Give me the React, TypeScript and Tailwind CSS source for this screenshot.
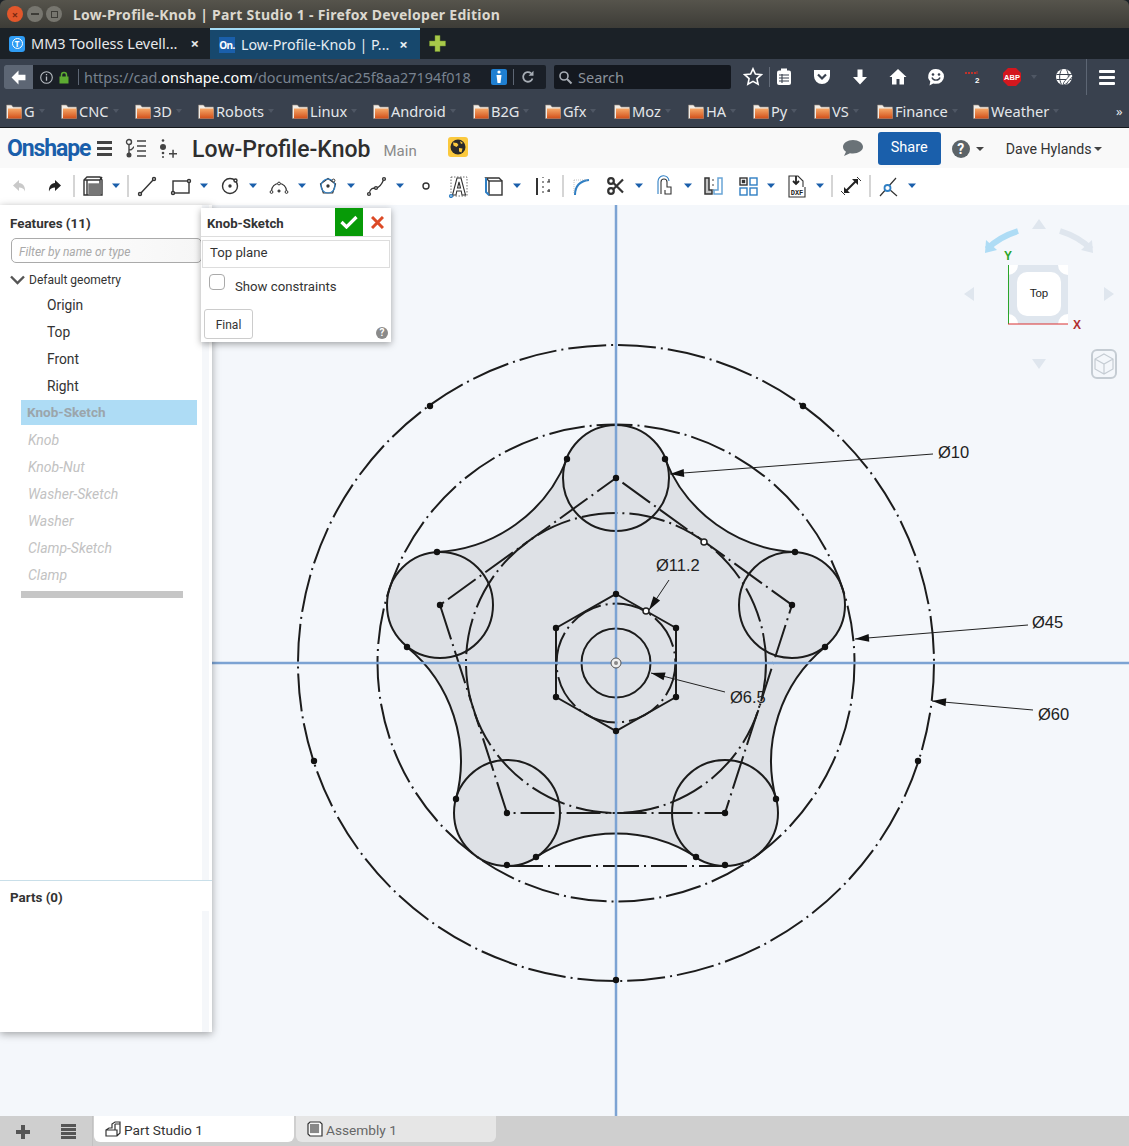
import React from "react";

const chrome = "font-['Noto_Sans',sans-serif]";
const ui = "font-['Roboto',sans-serif]";

function Folder() {
  return (
    <svg width="16" height="15" viewBox="0 0 16 15" className="shrink-0">
      <defs>
        <linearGradient id="fold" x1="0" y1="0" x2="0" y2="1">
          <stop offset="0" stopColor="#f6a868" />
          <stop offset="1" stopColor="#d2501a" />
        </linearGradient>
      </defs>
      <path d="M0.5 14.5V1h5l1.5 2h8.5v11.5z" fill="#f1ece6" stroke="#8d8378" strokeWidth="0.6" />
      <rect x="2" y="4.5" width="13.5" height="10" fill="url(#fold)" />
    </svg>
  );
}

function Bookmark({ label, cls }: { label: string; cls: string }) {
  return (
    <div className={`flex items-center shrink-0 ${cls}`}>
      <Folder />
      <span className="ml-[2px] text-[14.6px] text-[#e4e7ea] leading-none">{label}</span>
      <span className="ml-[4px] w-0 h-0 border-x-[3px] border-x-transparent border-t-[4px] border-t-[#4f5764]" />
    </div>
  );
}

function Caret({ cls }: { cls: string }) {
  return (
    <svg width="10" height="6" viewBox="0 0 10 6" className={`shrink-0 ${cls}`}>
      <path d="M1 0.5h8L5 5z" fill="#1a5fab" />
    </svg>
  );
}

function Sep({ cls }: { cls: string }) {
  return <div className={`w-[2px] h-[22px] bg-[#d5d5d5] shrink-0 ${cls}`} />;
}

function Tool({ cls, children }: { cls: string; children: React.ReactNode }) {
  return (
    <svg width="24" height="24" viewBox="0 0 24 24" fill="none" stroke="#333" strokeWidth="1.4" className={`shrink-0 ${cls}`}>
      {children}
    </svg>
  );
}

function NavIcon({ cls, children }: { cls: string; children: React.ReactNode }) {
  return (
    <svg width="20" height="20" viewBox="0 0 20 20" className={`shrink-0 ${cls}`}>
      {children}
    </svg>
  );
}

function TitleBar() {
  return (
    <div className={`h-[28px] shrink-0 rounded-t-[6px] bg-gradient-to-b from-[#56544c] to-[#3d3c37] flex items-center pl-[7px] ${chrome}`}>
      <div className="w-[16px] h-[16px] rounded-full bg-[#e2572b] flex items-center justify-center text-[#7a2a12] text-[11px] font-bold leading-none">×</div>
      <div className="ml-[4px] w-[16px] h-[16px] rounded-full bg-[#77766f] flex items-center justify-center">
        <div className="w-[8px] h-[2px] bg-[#3d3c37]" />
      </div>
      <div className="ml-[3px] w-[16px] h-[16px] rounded-full bg-[#77766f] flex items-center justify-center">
        <div className="w-[7px] h-[7px] border border-[#3d3c37]" />
      </div>
      <span className="ml-[11px] text-[14px] font-bold text-[#dcd8cf] tracking-[0.28px] whitespace-nowrap">
        Low-Profile-Knob | Part Studio 1 - Firefox Developer Edition
      </span>
    </div>
  );
}

function TabStrip() {
  return (
    <div className={`h-[31px] shrink-0 bg-[#1b2127] flex items-stretch ${chrome}`}>
      <div className="w-[210px] flex items-center pl-[9px]">
        <div className="w-[16px] h-[16px] rounded-[3px] bg-[#2f9cf4] flex items-center justify-center">
          <div className="w-[11px] h-[11px] rounded-full border border-white text-white text-[8px] leading-[9px] text-center font-bold">T</div>
        </div>
        <span className="ml-[6px] text-[14.5px] text-[#e7e9eb] whitespace-nowrap">MM3 Toolless Levell...</span>
        <span className="ml-[13px] text-[#e7e9eb] text-[15px] font-bold leading-none">×</span>
      </div>
      <div className="w-[210px] bg-[#17486d] border-t-[2px] border-[#a5dcf5] flex items-center pl-[9px]">
        <div className="w-[16px] h-[16px] bg-[#1a5fab] text-white text-[10px] font-bold leading-[16px] text-center tracking-[-0.5px]">On.</div>
        <span className="ml-[6px] text-[14.3px] text-[#e7eef3] whitespace-nowrap">Low-Profile-Knob | P...</span>
        <span className="ml-[10px] text-[#e7eef3] text-[15px] font-bold leading-none">×</span>
      </div>
      <svg width="17" height="17" viewBox="0 0 17 17" className="ml-[9px] self-center">
        <path d="M6 0.5h5v5.5h5.5v5H11v5.5H6V11H0.5V6H6z" fill="#a8c94a" stroke="#6f8e2c" strokeWidth="0.5" />
      </svg>
    </div>
  );
}

function NavBar() {
  return (
    <div className={`h-[36px] shrink-0 bg-[#39414e] flex items-center pl-[4px] ${chrome}`}>
      <div className="w-[542px] h-[24px] bg-[#1a1f27] rounded-[2px] flex items-center overflow-hidden shrink-0">
        <div className="w-[29px] h-full bg-[#5d6674] flex items-center justify-center shrink-0">
          <svg width="17" height="15" viewBox="0 0 15 14">
            <path d="M7.5 0.5L1 7l6.5 6.5V9.5H14v-5H7.5z" fill="#fff" />
          </svg>
        </div>
        <svg width="13" height="13" viewBox="0 0 13 13" className="ml-[7px] shrink-0">
          <circle cx="6.5" cy="6.5" r="5.8" fill="none" stroke="#b9bec4" strokeWidth="1.1" />
          <path d="M6.5 5.5v4.2M6.5 3v1.3" stroke="#b9bec4" strokeWidth="1.3" />
        </svg>
        <svg width="10" height="13" viewBox="0 0 10 13" className="ml-[6px] shrink-0">
          <path d="M2.5 6V4a2.5 2.5 0 0 1 5 0v2" fill="none" stroke="#5dab32" strokeWidth="1.5" />
          <rect x="0.5" y="5.5" width="9" height="7" fill="#5dab32" />
        </svg>
        <div className="ml-[9px] w-px h-[16px] bg-[#5d6674] shrink-0" />
        <span className="ml-[5px] mt-[1px] text-[14.4px] text-[#78828f] whitespace-nowrap">
          https://cad.<span className="text-white">onshape.com</span>/documents/ac25f8aa27194f018
        </span>
        <div className="ml-[20px] w-[16px] h-[16px] rounded-[2px] bg-[#1f7fd1] flex flex-col items-center justify-center shrink-0">
          <svg width="8" height="14" viewBox="0 0 8 14">
            <circle cx="4" cy="2" r="1.6" fill="#fff" />
            <path d="M1.5 5h5L5.5 13h-3z" fill="#fff" />
          </svg>
        </div>
        <div className="ml-[6px] w-px h-[16px] bg-[#5d6674] shrink-0" />
        <svg width="14" height="14" viewBox="0 0 14 14" className="ml-[7px] shrink-0">
          <path d="M11.5 8.5A4.8 4.8 0 1 1 10 3.2" fill="none" stroke="#a7adb5" strokeWidth="1.8" />
          <path d="M12.5 0.8v5h-5z" fill="#a7adb5" />
        </svg>
      </div>
      <div className="ml-[8px] w-[177px] h-[24px] bg-[#14181f] rounded-[2px] flex items-center pl-[4px] shrink-0">
        <svg width="15" height="15" viewBox="0 0 15 15">
          <circle cx="6" cy="6" r="4" fill="none" stroke="#a7adb5" strokeWidth="1.6" />
          <path d="M9 9l4.5 4.5" stroke="#a7adb5" strokeWidth="2" />
        </svg>
        <span className="ml-[5px] mt-[1px] text-[14.5px] text-[#8b929b]">Search</span>
      </div>
      <NavIcon cls="ml-[12px]">
        <path d="M10 1.8l2.4 5.3 5.8.6-4.3 3.9 1.2 5.7L10 14.4l-5.1 2.9 1.2-5.7-4.3-3.9 5.8-.6z" fill="none" stroke="#fff" strokeWidth="1.6" />
      </NavIcon>
      <div className="ml-[6px] w-px h-[20px] bg-[#646c79] shrink-0" />
      <NavIcon cls="ml-[4px]">
        <rect x="3" y="3.5" width="14" height="14.5" rx="2" fill="#fff" />
        <rect x="7" y="1.5" width="6" height="3.5" fill="#fff" />
        <path d="M5 8h10M5 11h10M5 14h10M8 7v9" stroke="#39414e" strokeWidth="1.1" />
      </NavIcon>
      <NavIcon cls="ml-[18px]">
        <path d="M2 3h16a1 1 0 0 1 0 .5V9a8 8 0 0 1-16 0V3.5A1 1 0 0 1 2 3z" fill="#fff" />
        <path d="M6 7.5l4 4 4-4" fill="none" stroke="#39414e" strokeWidth="2.2" />
      </NavIcon>
      <NavIcon cls="ml-[18px]">
        <path d="M7.5 2.5h5V10h4.5L10 17.5 3 10h4.5z" fill="#fff" />
      </NavIcon>
      <NavIcon cls="ml-[18px]">
        <path d="M10 2L1.5 10H4v7.5h4.5V12h3v5.5H16V10h2.5z" fill="#fff" />
      </NavIcon>
      <NavIcon cls="ml-[18px]">
        <path d="M10 2a8 7.4 0 0 1 0 14.8c-1 0-2-.1-2.8-.4L3.5 18.5 4.3 14.5A7.5 7.4 0 0 1 10 2z" fill="#fff" />
        <circle cx="7" cy="7.5" r="1.3" fill="#39414e" />
        <circle cx="13" cy="7.5" r="1.3" fill="#39414e" />
        <path d="M6 10.5c1 3.5 7 3.5 8 0" fill="none" stroke="#39414e" strokeWidth="1.4" />
      </NavIcon>
      <NavIcon cls="ml-[16px]">
        <path d="M3 6h2M6 6h2M9 6h2M12 6h2" stroke="#c0322c" strokeWidth="2" />
        <path d="M15 4v3" stroke="#c0322c" strokeWidth="1" />
        <text x="13" y="16" fontSize="8" fontWeight="700" fill="#fff" fontFamily="Liberation Sans, sans-serif">2</text>
      </NavIcon>
      <NavIcon cls="ml-[20px]">
        <path d="M6 1h8l5 5v8l-5 5H6l-5-5V6z" fill="#d4171e" />
        <text x="10" y="13" fontSize="7.5" fontWeight="700" fill="#fff" textAnchor="middle" fontFamily="Liberation Sans, sans-serif">ABP</text>
      </NavIcon>
      <span className="ml-[9px] w-0 h-0 border-x-[3px] border-x-transparent border-t-[4px] border-t-[#4f5764]" />
      <NavIcon cls="ml-[17px]">
        <circle cx="10" cy="10" r="8" fill="#fff" />
        <path d="M2.5 7.5h15M2.5 12.5h15M7.5 2.5c-2.5 5-2.5 10 0 15M12.5 2.5c2.5 5 2.5 10 0 15" fill="none" stroke="#39414e" strokeWidth="1" />
        <path d="M17 7l2 2-7 8-3 1 1-3z" fill="#fff" stroke="#39414e" strokeWidth="0.8" />
      </NavIcon>
      <div className="ml-[12px] w-px h-[36px] bg-[#5d6674] shrink-0" />
      <div className="ml-[12px] w-[16px] flex flex-col gap-[3px]">
        <div className="h-[3px] bg-white rounded-[1px]" />
        <div className="h-[3px] bg-white rounded-[1px]" />
        <div className="h-[3px] bg-white rounded-[1px]" />
      </div>
    </div>
  );
}

function BookmarksBar() {
  return (
    <div className={`h-[33px] shrink-0 bg-[#39414e] border-b border-[#15181c] flex items-center pl-[6px] ${chrome}`}>
      <Bookmark label="G" cls="w-[55px]" />
      <Bookmark label="CNC" cls="w-[74px]" />
      <Bookmark label="3D" cls="w-[63px]" />
      <Bookmark label="Robots" cls="w-[94px]" />
      <Bookmark label="Linux" cls="w-[81px]" />
      <Bookmark label="Android" cls="w-[100px]" />
      <Bookmark label="B2G" cls="w-[72px]" />
      <Bookmark label="Gfx" cls="w-[69px]" />
      <Bookmark label="Moz" cls="w-[74px]" />
      <Bookmark label="HA" cls="w-[65px]" />
      <Bookmark label="Py" cls="w-[61px]" />
      <Bookmark label="VS" cls="w-[63px]" />
      <Bookmark label="Finance" cls="w-[96px]" />
      <Bookmark label="Weather" cls="w-[143px]" />
      <span className="text-[13px] text-[#e4e7ea] leading-none">»</span>
    </div>
  );
}

function Header() {
  return (
    <div className={`h-[40px] shrink-0 bg-[#f9f9f9] flex items-center ${ui}`}>
      <span className="ml-[7px] w-[78px] text-[23px] font-bold text-[#1a5fab] tracking-[-1.1px] leading-none">Onshape</span>
      <div className="ml-[12px] w-[15px] flex flex-col gap-[3px]">
        <div className="h-[3px] bg-[#444]" />
        <div className="h-[3px] bg-[#444]" />
        <div className="h-[3px] bg-[#444]" />
      </div>
      <svg width="22" height="20" viewBox="0 0 22 20" className="ml-[13px]" fill="none" stroke="#444" strokeWidth="1.4">
        <circle cx="4" cy="4" r="2.5" />
        <circle cx="4" cy="17" r="1.8" fill="#444" />
        <path d="M4 6.5V15M4 12c4 0 4-3 5-3M12 3h9M12 8h9M12 13h9M12 18h9" />
      </svg>
      <svg width="18" height="20" viewBox="0 0 18 20" className="ml-[12px]" fill="#444">
        <circle cx="4" cy="2.5" r="1.3" />
        <circle cx="4" cy="9" r="3" />
        <circle cx="4" cy="15" r="1.3" />
        <circle cx="4" cy="19" r="1" />
        <path d="M10 15h8v1.5h-8zM13.3 11.8h1.5v8h-1.5z" />
      </svg>
      <span className="ml-[15px] mt-[3px] text-[23px] font-medium text-[#2e2e2e] leading-none whitespace-nowrap">Low-Profile-Knob</span>
      <span className="ml-[13px] mt-[6px] text-[15px] text-[#8a8a8a] leading-none">Main</span>
      <div className="ml-[31px] mb-[2px] w-[20px] h-[20px] rounded-[3px] bg-[#fbc93e] flex items-center justify-center">
        <svg width="16" height="16" viewBox="0 0 16 16">
          <circle cx="8" cy="8" r="7.5" fill="#2b2b2b" />
          <path d="M3 3.5l4 .5 1.5 2-2 2-3-1.5zM9 9l3.5.5-1 4-2.5-1zM10 2l3 2-2 1z" fill="#fbc93e" />
        </svg>
      </div>
      <svg width="22" height="18" viewBox="0 0 22 18" className="ml-[374px]">
        <path d="M11 1c5.5 0 10 3 10 6.8s-4.5 6.7-10 6.7c-1 0-2-.1-3-.3L2 17l2-4.2C2 11.500 1 9.800 1 7.800 1 4 5.500 1 11 1z" fill="#6a7277" />
      </svg>
      <div className="ml-[14px] w-[63px] h-[33px] rounded-[3px] bg-[#1a5fab] flex items-center justify-center text-[14.5px] text-white">Share</div>
      <div className="ml-[11px] mt-[2px] w-[18px] h-[18px] rounded-full bg-[#5c6367] flex items-center justify-center text-[14px] font-bold text-white leading-none">?</div>
      <span className="ml-[6px] mt-[2px] w-0 h-0 border-x-[4px] border-x-transparent border-t-[4px] border-t-[#444]" />
      <span className="ml-[22px] mt-[4px] text-[14.2px] text-[#333] whitespace-nowrap">Dave Hylands</span>
      <span className="ml-[2px] mt-[1px] w-0 h-0 border-x-[4px] border-x-transparent border-t-[4px] border-t-[#444]" />
    </div>
  );
}

function Toolbar() {
  return (
    <div className="h-[37px] shrink-0 bg-white flex items-center pb-[2px]">
      <svg width="24" height="24" viewBox="0 0 24 24" className="ml-[8px] shrink-0">
        <path d="M11 6L5 11.5l6 5.5v-3.5c3 0 5 1 6 4 .5-5-2-8-6-8.500z" fill="#c9c9c9" />
      </svg>
      <svg width="24" height="24" viewBox="0 0 24 24" className="ml-[10px] shrink-0">
        <path d="M13 6l6 5.5-6 5.5v-3.5c-3 0-5 1-6 4-.5-5 2-8 6-8.500z" fill="#222" />
      </svg>
      <Sep cls="ml-[7px]" />
      <Tool cls="ml-[6px]">
        <path d="M3 6l3-3h13l2 3v15H3z" fill="#fff" />
        <path d="M3 6h16v15M19 6l2-3" />
        <rect x="8" y="10" width="11" height="11" fill="#777" stroke="#777" />
        <path d="M6 6v15" />
      </Tool>
      <Caret cls="ml-[6px]" />
      <Sep cls="ml-[6px]" />
      <Tool cls="ml-[6px]">
        <path d="M5 20L19 5" />
        <circle cx="5" cy="20" r="1.5" fill="#fff" />
        <circle cx="19" cy="5" r="1.5" fill="#fff" />
      </Tool>
      <Tool cls="ml-[10px]">
        <rect x="4" y="7" width="16" height="12" />
        <circle cx="20" cy="7" r="1.5" fill="#fff" />
        <circle cx="4" cy="19" r="1.5" fill="#fff" />
      </Tool>
      <Caret cls="ml-[6px]" />
      <Tool cls="ml-[9px]">
        <circle cx="12" cy="12" r="7.5" />
        <circle cx="12" cy="12" r="1" fill="#333" />
        <circle cx="17.5" cy="6.5" r="1.5" fill="#fff" />
      </Tool>
      <Caret cls="ml-[6px]" />
      <Tool cls="ml-[9px]">
        <path d="M4.5 17a7.5 7.5 0 0 1 15 0" strokeWidth="1.2" />
        <path d="M10.5 17h3M12 15.5v3" />
        <circle cx="4.5" cy="18" r="1.4" fill="#fff" strokeWidth="1" />
        <circle cx="19.5" cy="18" r="1.4" fill="#fff" strokeWidth="1" />
        <circle cx="12" cy="9.5" r="1.4" fill="#fff" strokeWidth="1" />
      </Tool>
      <Caret cls="ml-[6px]" />
      <Tool cls="ml-[9px]">
        <path d="M12 4.5l7.5 5.5-2.8 9H7.300l-2.800-9z" strokeWidth="1.2" />
        <circle cx="12" cy="12" r="7" stroke="#2f7fc4" strokeWidth="1.2" />
        <circle cx="12" cy="12" r="1" fill="#333" />
        <circle cx="17.5" cy="6.5" r="1.4" fill="#fff" strokeWidth="1" />
      </Tool>
      <Caret cls="ml-[6px]" />
      <Tool cls="ml-[9px]">
        <path d="M4 20c1-6 4-6 7-6s5-2 8-9" />
        <circle cx="4" cy="20" r="1.4" fill="#fff" />
        <circle cx="11" cy="14" r="1.4" fill="#fff" />
        <circle cx="19" cy="5" r="1.4" fill="#fff" />
      </Tool>
      <Caret cls="ml-[6px]" />
      <Tool cls="ml-[9px]">
        <circle cx="12" cy="12" r="3" />
      </Tool>
      <Tool cls="ml-[9px]">
        <rect x="4" y="3" width="16" height="19" strokeDasharray="1.5 1.5" strokeWidth="0.7" />
        <path d="M5.5 21L10 4h4l4.5 17h-3.5l-.8-4h-4.4l-.8 4zM10.500 14h3L12 8z" strokeWidth="1.1" fill="#fff" />
        <circle cx="4" cy="22" r="1.4" fill="#fff" stroke="#2f7fc4" />
      </Tool>
      <Tool cls="ml-[11px]">
        <path d="M7 7L4 4h13l3 3" />
        <rect x="7" y="7" width="13" height="14" fill="#fff" />
        <path d="M4 4v14l3 3" stroke="#2f7fc4" strokeWidth="2" />
      </Tool>
      <Caret cls="ml-[6px]" />
      <Tool cls="ml-[9px]">
        <path d="M6 4v17" strokeWidth="2" />
        <path d="M12 3v1M12 7v2M12 12v2M12 17v2" stroke="#666" />
        <path d="M16 8h3M16 17h3M18 5v3M18 15v3" strokeWidth="1.2" />
      </Tool>
      <Sep cls="ml-[7px]" />
      <Tool cls="ml-[6px]">
        <path d="M5 21c0-9 5-14 14-15" stroke="#2f7fc4" strokeWidth="2" />
        <path d="M4 6h14M4 6v14" stroke="#aaa" strokeWidth="0.7" strokeDasharray="1 1" />
      </Tool>
      <Tool cls="ml-[10px]">
        <circle cx="7" cy="7" r="2.8" strokeWidth="2.2" />
        <circle cx="7" cy="17" r="2.8" strokeWidth="2.2" />
        <path d="M9.5 9L19 18.500M9.500 15L19 5.500" strokeWidth="2.2" />
      </Tool>
      <Caret cls="ml-[6px]" />
      <Tool cls="ml-[9px]">
        <path d="M8 20V8a3 3 0 0 1 6 0v5h4v7h-6v-4" strokeWidth="1.1" />
        <path d="M5 20V7.5a5.5 5.5 0 0 1 11-.5" stroke="#2f7fc4" strokeWidth="1.1" />
      </Tool>
      <Caret cls="ml-[6px]" />
      <Tool cls="ml-[8px]">
        <path d="M4 4h4v12h3v4H4z" fill="#555" fillOpacity="0.35" strokeWidth="1.5" />
        <path d="M12 5v2M12 10v2M12 15v2" stroke="#777" />
        <path d="M17 4h4v16h-8v-4h4z" stroke="#6aa5d6" strokeWidth="1.5" />
      </Tool>
      <Tool cls="ml-[11px]">
        <rect x="4" y="4" width="7" height="7" stroke="#333" />
        <rect x="6.5" y="6.5" width="2" height="2" fill="#333" />
        <rect x="14" y="4" width="7" height="7" stroke="#2f7fc4" />
        <rect x="4" y="14" width="7" height="7" stroke="#2f7fc4" />
        <rect x="14" y="14" width="7" height="7" stroke="#2f7fc4" />
      </Tool>
      <Caret cls="ml-[6px]" />
      <Tool cls="ml-[9px]">
        <path d="M4 13V2h9l5 5v6M4 13v10h16V13" strokeWidth="1.1" />
        <path d="M11 2v8M8 7l3 3 3-3" stroke="#222" strokeWidth="1.8" />
        <text x="12" y="20.5" fontSize="7" fontWeight="700" textAnchor="middle" fill="#222" stroke="none" fontFamily="Liberation Mono, monospace">DXF</text>
      </Tool>
      <Caret cls="ml-[6px]" />
      <Sep cls="ml-[6px]" />
      <Tool cls="ml-[6px]">
        <path d="M7 17L17 7" stroke="#222" strokeWidth="2" />
        <path d="M13 5h6v6zM11 19H5v-6z" fill="#222" stroke="none" />
        <path d="M18 3l4 4M2 17l4 4" strokeWidth="1" />
      </Tool>
      <Sep cls="ml-[6px]" />
      <Tool cls="ml-[6px]">
        <path d="M3 22L19 4M12 15l8 7" strokeWidth="1.2" />
        <circle cx="10.5" cy="14" r="3" fill="#fff" stroke="#2f7fc4" strokeWidth="1.8" />
      </Tool>
      <Caret cls="ml-[6px]" />
    </div>
  );
}

function Sidebar() {
  const defaults = ["Origin", "Top", "Front", "Right"];
  const rest = ["Knob", "Knob-Nut", "Washer-Sketch", "Washer", "Clamp-Sketch", "Clamp"];
  return (
    <div className={`relative z-10 w-[212px] h-[827px] bg-white shadow-[0_2px_8px_rgba(0,0,0,0.35)] flex flex-col ${ui}`}>
      <div className="absolute top-0 bottom-0 right-[3px] w-[7px] bg-[#f5f7fa]" />
      <div className="relative flex-1 pl-[10px] pt-[10px]">
        <div className="text-[13.4px] font-bold text-[#333] leading-[17px]">Features (11)</div>
        <div className="mt-[6px] w-[191px] ml-px h-[25px] border border-[#aaa] rounded-[5px] bg-gradient-to-r from-white to-[#f6f6f6] pl-[7px] text-[12px] italic text-[#a9a9a9] leading-[26px] whitespace-nowrap">
          Filter by name or type
        </div>
        <div className="mt-[7px] h-[20px] flex items-center">
          <svg width="15" height="10" viewBox="0 0 15 10">
            <path d="M1 1.5l6.5 6.5L14 1.5" fill="none" stroke="#555" strokeWidth="2.4" />
          </svg>
          <span className="ml-[4px] text-[12px] text-[#333]">Default geometry</span>
        </div>
        <div className="mt-[2px] pl-[37px] flex flex-col">
          {defaults.map((d) => (
            <div key={d} className="h-[27px] text-[13.8px] text-[#333] leading-[26px]">{d}</div>
          ))}
        </div>
        <div className="ml-[11px] w-[176px] h-[25px] bg-[#aedcf5] pl-[6px] text-[13.5px] font-bold text-[#9ba5ab] leading-[25px]">Knob-Sketch</div>
        <div className="mt-[2px] pl-[18px] flex flex-col">
          {rest.map((d) => (
            <div key={d} className="h-[27px] text-[14px] italic text-[#c2c2c2] leading-[27px]">{d}</div>
          ))}
        </div>
        <div className="ml-[11px] mt-[2px] w-[162px] h-[7px] bg-[#c6c6c6]" />
      </div>
      <div className="relative h-[31px] bg-white border-t border-[#c9dfe9] pl-[10px] text-[13.4px] font-bold text-[#333] leading-[33px]">Parts (0)</div>
      <div className="relative h-[121px]" />
    </div>
  );
}

function SketchDialog() {
  return (
    <div className={`absolute z-20 left-[201px] top-[3px] w-[190px] h-[134px] bg-white shadow-[0_2px_7px_rgba(0,0,0,0.35)] flex flex-col ${ui}`}>
      <div className="h-[28px] flex items-stretch border-b border-[#ddd] box-content">
        <span className="ml-[6px] w-[128px] text-[13.2px] font-bold text-[#333] leading-[31px]">Knob-Sketch</span>
        <div className="w-[28px] bg-[#079b07] flex items-center justify-center">
          <svg width="18" height="14" viewBox="0 0 18 14">
            <path d="M1.5 7l5 5L16.5 2" fill="none" stroke="#fff" strokeWidth="3.2" />
          </svg>
        </div>
        <div className="flex-1 flex items-center justify-center">
          <svg width="13" height="13" viewBox="0 0 13 13">
            <path d="M1 1l11 11M12 1L1 12" stroke="#dc4a26" strokeWidth="3" />
          </svg>
        </div>
      </div>
      <div className="mt-[3px] mx-[1px] h-[28px] border border-[#ddd] pl-[7px] text-[13.2px] text-[#333] leading-[24px]">Top plane</div>
      <div className="mt-[6px] flex items-start pl-[8px]">
        <div className="w-[16px] h-[16px] rounded-[4px] border border-[#aaa] bg-white" />
        <span className="ml-[10px] mt-[4px] text-[13.2px] text-[#333] leading-[17px]">Show constraints</span>
      </div>
      <div className="relative mt-[14px] ml-[3px] w-[49px] h-[30px] border border-[#ccc] rounded-[3px] text-[12px] text-[#333] leading-[30px] text-center">Final</div>
      <div className="absolute right-[3px] bottom-[3px] w-[12px] h-[12px] rounded-full bg-[#8a8a8a] text-white text-[10px] font-bold leading-[12px] text-center">?</div>
    </div>
  );
}

function Leader({ x1, y1, x2, y2 }: { x1: number; y1: number; x2: number; y2: number }) {
  const a = Math.atan2(y2 - y1, x2 - x1);
  const l = 14;
  const w = 4;
  const bx = x2 - Math.cos(a) * l;
  const by = y2 - Math.sin(a) * l;
  const pts = `${x2},${y2} ${bx - Math.sin(a) * w},${by + Math.cos(a) * w} ${bx + Math.sin(a) * w},${by - Math.cos(a) * w}`;
  return (
    <g>
      <line x1={x1} y1={y1} x2={x2} y2={y2} stroke="#222" strokeWidth="1" />
      <polygon points={pts} fill="#111" />
    </g>
  );
}

function Drawing() {
  const dots: [number, number][] = [
    [567, 459], [665, 459], [795, 552], [825, 647], [776, 799], [696, 857], [536, 857], [456, 799], [407, 647], [437, 552],
    [507, 865], [725, 865], [616, 478], [792, 605], [725, 813], [507, 813], [440, 605],
    [616, 594], [676, 628], [676, 697], [616, 731], [556, 697], [556, 628],
    [430, 406], [803, 406], [314, 761], [918, 761], [616, 980],
  ];
  const lobes: [number, number][] = [[616, 478], [792, 605], [725, 813], [507, 813], [440, 605]];
  const line = "#1c1c1c";
  return (
    <svg viewBox="0 205 1129 911" className="absolute inset-0 w-full h-full" fill="none">
      {/* knob body */}
      <path
        d="M567 459A53 53 0 0 1 665 459A148 148 0 0 0 795 552A53 53 0 0 1 825 647A148 148 0 0 0 776 799A53 53 0 0 1 696 857A148 148 0 0 0 536 857A53 53 0 0 1 456 799A148 148 0 0 0 407 647A53 53 0 0 1 437 552A148 148 0 0 0 567 459Z"
        fill="#dee1e6"
      />
      {lobes.map(([x, y]) => (
        <circle key={x} cx={x} cy={y} r="53" fill="#dee1e6" stroke={line} strokeWidth="2" />
      ))}
      <path
        d="M665 459A148 148 0 0 0 795 552M825 647A148 148 0 0 0 776 799M696 857A148 148 0 0 0 536 857M456 799A148 148 0 0 0 407 647M437 552A148 148 0 0 0 567 459"
        stroke={line}
        strokeWidth="2"
      />

      {/* construction geometry */}
      <circle cx="616" cy="663" r="318" stroke={line} strokeWidth="2" strokeDasharray="38 5 2 5" />
      <circle cx="616" cy="663" r="238.5" stroke={line} strokeWidth="2" strokeDasharray="36 5 2 5" />
      <circle cx="616" cy="663" r="150" stroke={line} strokeWidth="2" strokeDasharray="36 5 2 5" />
      <circle cx="616" cy="663" r="59.4" stroke={line} strokeWidth="2" strokeDasharray="34 5 2 5" />
      <path
        d="M616 478L792 605L725 813H507L440 605Z"
        stroke={line}
        strokeWidth="2"
        strokeDasharray="34 5 2 5"
        strokeDashoffset="-8"
      />
      <path d="M507 866H725" stroke={line} strokeWidth="2" strokeDasharray="36 5 2 5" />

      {/* nut and bore */}
      <path d="M616 594L676 628V697L616 731L556 697V628Z" stroke={line} strokeWidth="2" />
      <circle cx="616" cy="663" r="34.5" stroke={line} strokeWidth="2" />

      {/* axes */}
      <path d="M616 205V1116M212 663H1129" stroke="#7ca3d3" strokeWidth="2.5" />

      {dots.map(([x, y]) => (
        <circle key={`${x}-${y}`} cx={x} cy={y} r="3.2" fill="#111" />
      ))}
      <circle cx="704" cy="542" r="3" fill="#fff" stroke="#222" strokeWidth="1.5" />
      <circle cx="646" cy="611" r="3" fill="#fff" stroke="#222" strokeWidth="1.5" />
      <circle cx="616" cy="663" r="5" fill="#eee" stroke="#555" strokeWidth="1" />
      <circle cx="616" cy="663" r="2" fill="#888" />

      {/* dimensions */}
      <Leader x1={933} y1={454} x2={670} y2={474} />
      <Leader x1={1028} y1={625} x2={855} y2={639} />
      <Leader x1={1033} y1={710} x2={932} y2={701} />
      <Leader x1={669} y1={580} x2={649} y2={610} />
      <Leader x1={725} y1={692} x2={651} y2={673} />
      <g fontFamily="'Liberation Sans', sans-serif" fontSize="16.5" fill="#222">
        <text x="938" y="458">Ø10</text>
        <text x="1032" y="628">Ø45</text>
        <text x="1038" y="720">Ø60</text>
        <text x="656" y="571">Ø11.2</text>
        <text x="730" y="703">Ø6.5</text>
      </g>

      {/* view cube */}
      <path d="M1039 219l7 10h-14zM1039 369l7-10h-14zM964 294l10-7v14zM1114 294l-10-7v14z" fill="#dfe6ee" />
      <path d="M1018 231C1005 235 995 241 987 249" stroke="#aedcf5" strokeWidth="6" />
      <path d="M985 253l1-13 11 10z" fill="#aedcf5" />
      <path d="M1060 231C1073 235 1083 241 1091 249" stroke="#dfe6ee" strokeWidth="6" />
      <path d="M1093 253l-1-13-11 10z" fill="#dfe6ee" />
      <rect x="1008" y="265" width="60" height="59" fill="#dfe6ee" />
      <path d="M1008 265h10a10 10 0 0 1-10 10zM1068 265v10a10 10 0 0 1-10-10zM1008 324v-10a10 10 0 0 1 10 10zM1068 324h-10a10 10 0 0 1 10-10z" fill="#fff" />
      <rect x="1017" y="272" width="44" height="44" rx="10" fill="#fff" />
      <path d="M1008.5 265V324" stroke="#2aa52a" strokeWidth="1" />
      <path d="M1008 324H1068" stroke="#d93030" strokeWidth="1" />
      <g fontFamily="'Liberation Sans', sans-serif">
        <text x="1039" y="297" fontSize="11.5" fill="#222" textAnchor="middle">Top</text>
        <text x="1008" y="260" fontSize="12" fontWeight="700" fill="#2aa52a" textAnchor="middle">Y</text>
        <text x="1077" y="329" fontSize="12" fontWeight="700" fill="#b03030" textAnchor="middle">X</text>
      </g>
      <rect x="1092" y="350" width="24" height="28" rx="5" stroke="#c5ccd3" strokeWidth="2" />
      <path d="M1104 354l9 5v10l-9 5-9-5v-10zM1095 359l9 5 9-5M1104 364v10" stroke="#c5ccd3" strokeWidth="1.2" />
    </svg>
  );
}

function BottomBar() {
  return (
    <div className={`h-[30px] shrink-0 bg-[#cfcfcf] flex items-start ${ui}`}>
      <svg width="16" height="16" viewBox="0 0 16 16" className="ml-[15px] mt-[8px]">
        <path d="M6 1h4v5h5v4h-5v5H6v-5H1V6h5z" fill="#555" />
      </svg>
      <div className="ml-[30px] mt-[8px] w-[15px] flex flex-col gap-[1.5px]">
        <div className="h-[2.5px] bg-[#555]" />
        <div className="h-[2.5px] bg-[#555]" />
        <div className="h-[2.5px] bg-[#555]" />
        <div className="h-[2.5px] bg-[#555]" />
      </div>
      <div className="ml-[16px] w-px h-full bg-[#c2c2c2]" />
      <div className="ml-px w-[200px] h-[26px] bg-white rounded-b-[6px] flex items-center pl-[11px]">
        <svg width="16" height="16" viewBox="0 0 16 16" fill="none" stroke="#333" strokeWidth="1.2" className="shrink-0">
          <path d="M1 9l3-2h3V3l3-2h5v11l-3 3H1zM1 9h6l3 0V3M10 3h5M12 15V9H7" />
        </svg>
        <span className="ml-[3px] mt-[2px] text-[13.7px] text-[#333]">Part Studio 1</span>
      </div>
      <div className="ml-[2px] w-[200px] h-[26px] bg-[#e6e6e6] rounded-b-[6px] flex items-center pl-[11px]">
        <svg width="16" height="16" viewBox="0 0 16 16" fill="none" stroke="#333" strokeWidth="1.2" className="shrink-0">
          <path d="M1 3l2-2h10l2 2v12H3l-2-2z" fill="#fff" />
          <rect x="3.5" y="3.5" width="8" height="8" fill="#888" stroke="#888" />
        </svg>
        <span className="ml-[3px] mt-[2px] text-[13.7px] text-[#666]">Assembly 1</span>
      </div>
    </div>
  );
}

export default function App() {
  return (
    <div className="w-full h-[1146px] flex flex-col overflow-hidden bg-[#1b2127]">
      <TitleBar />
      <TabStrip />
      <NavBar />
      <BookmarksBar />
      <Header />
      <Toolbar />
      <div className="relative flex-1 bg-[#f4f7fb]">
        <Drawing />
        <Sidebar />
        <SketchDialog />
      </div>
      <BottomBar />
    </div>
  );
}
